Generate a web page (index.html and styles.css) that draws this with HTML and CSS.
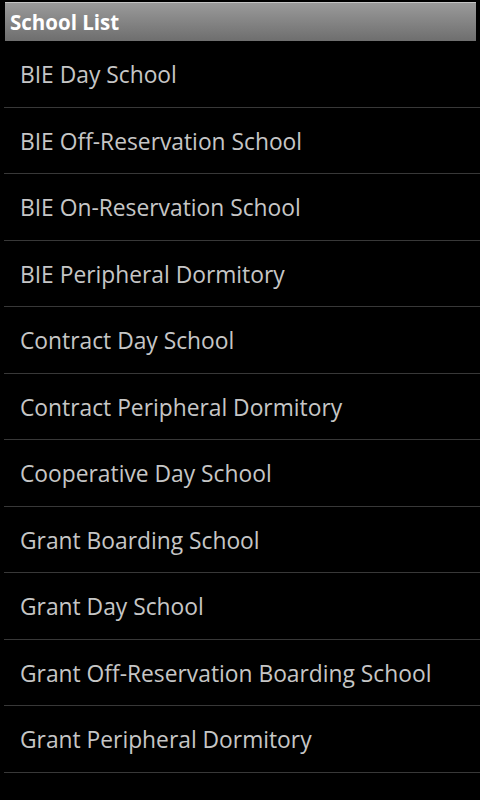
FILE: index.html
```html
<!DOCTYPE html>
<html lang="en">
<head>
    <meta charset="UTF-8">
    <meta name="viewport" content="width=device-width, initial-scale=1.0">
    <title>School List</title>
    <link rel="stylesheet" href="styles.css">
</head>
<body>
    <div class="title-bar">School List</div>

    <ul class="school-list">
        <li class="school-item">BIE Day School</li>
        <li class="school-item">BIE Off-Reservation School</li>
        <li class="school-item">BIE On-Reservation School</li>
        <li class="school-item">BIE Peripheral Dormitory</li>
        <li class="school-item">Contract Day School</li>
        <li class="school-item">Contract Peripheral Dormitory</li>
        <li class="school-item">Cooperative Day School</li>
        <li class="school-item">Grant Boarding School</li>
        <li class="school-item">Grant Day School</li>
        <li class="school-item">Grant Off-Reservation Boarding School</li>
        <li class="school-item">Grant Peripheral Dormitory</li>
    </ul>
</body>
</html>
```

FILE: styles.css
```css
body {
    margin: 0;
    background-color: #000;
    font-family: 'Open Sans', 'DejaVu Sans', sans-serif;
    overflow: hidden;
}

.title-bar {
    margin: 2px 4px 0 5px;
    height: 38px;
    padding-left: 5px;
    border-top: 1px solid #c4c4c4;
    background: linear-gradient(#9a9a9a, #6e6e6e);
    color: #fff;
    font-size: 20.5px;
    font-weight: bold;
    line-height: 38px;
}

.school-list {
    list-style: none;
    margin: 0;
    padding: 0;
}

.school-item {
    box-sizing: border-box;
    height: 66.5px;
    margin-left: 4px;
    padding-left: 16px;
    border-bottom: 1px solid #383838;
    color: #c6c6c6;
    font-size: 22.8px;
    line-height: 67px;
    white-space: nowrap;
}
```
